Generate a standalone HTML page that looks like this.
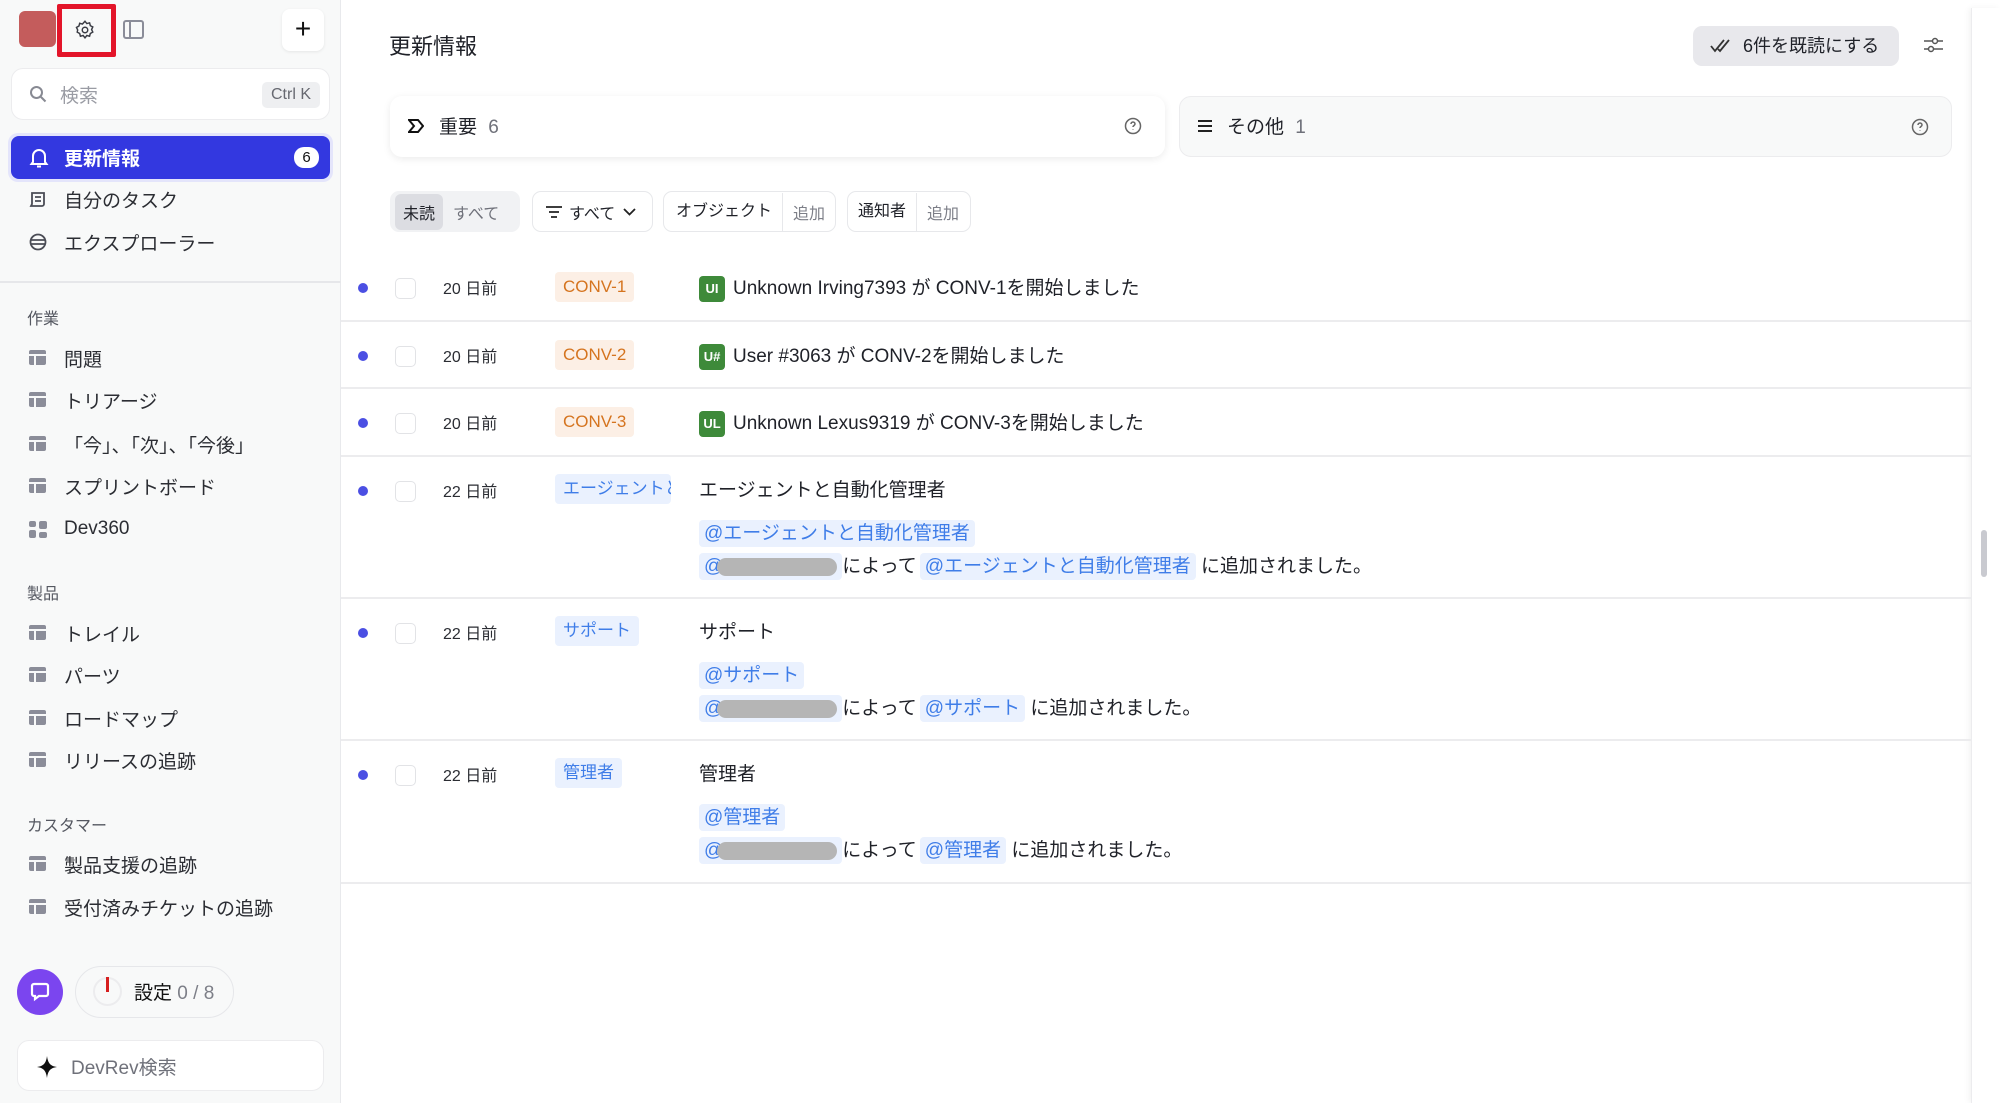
<!DOCTYPE html>
<html><head><meta charset="utf-8"><style>
*{box-sizing:border-box;margin:0;padding:0}
body{width:2000px;height:1103px;overflow:hidden;background:#fff;font-family:"Liberation Sans","Noto Sans CJK JP",sans-serif;color:#1f2128;position:relative}
.a{position:absolute}
.sb{left:0;top:0;width:341px;height:1103px;background:#f8f9f9;border-right:1px solid #e8e9ec}
.ni{position:absolute;left:0;width:341px;height:40px;display:flex;align-items:center;font-size:19px;color:#2b2d33}
.ni .ic{position:absolute;left:29px;top:12px}
.ni .t{position:absolute;left:64px}
.tb{width:17px;height:15px;background:#8b8d99;border-radius:2px;position:relative}
.tb:before{content:"";position:absolute;left:0;right:0;top:4px;height:1.5px;background:#f8f9f9}
.tb:after{content:"";position:absolute;left:5px;width:1.5px;top:5px;bottom:0;background:#f8f9f9}
.sec{position:absolute;left:27px;font-size:16px;color:#555861}
.row{position:absolute;left:341px;width:1630px;border-bottom:2px solid #ececee}
.dot{position:absolute;left:358px;width:10px;height:10px;border-radius:50%;background:#4b4fe3}
.cb{position:absolute;left:395px;width:21px;height:21px;border:1.5px solid #e2e3e6;border-radius:5px;background:#fff}
.dt{position:absolute;left:443px;font-size:16px;color:#2b2d33}
.tag{position:absolute;left:555px;height:30px;padding:0 8px;border-radius:4px;font-size:17px;line-height:30px}
.or{background:#fcefe5;color:#d5741f}
.bl{background:#eaf1fe;color:#3f7de8}
.txt{position:absolute;left:699px;font-size:19px;color:#1f2128;white-space:nowrap}
.av{display:inline-block;width:26px;height:26px;background:#3e8a3a;color:#fff;border-radius:4px;font-size:13px;font-weight:bold;text-align:center;line-height:26px;vertical-align:middle;margin-right:8px}
.m{display:inline-block;background:#eaf1fe;color:#3f7de8;border-radius:4px;padding:0 5px;line-height:27px}
.bx{display:inline-block;width:120px;height:18px;background:#b5b5b5;border-radius:9px;vertical-align:middle;margin-left:-6px}
.fl{position:absolute;top:191px;height:41px;border:1.5px solid #e7e8eb;border-radius:9px;font-size:16px;display:flex;align-items:center;background:#fff}
</style></head><body>
<div class="a sb">
 <div class="a" style="left:19px;top:11px;width:37px;height:36px;background:#c45c5c;border-radius:6px"></div>
 <div class="a" style="left:57px;top:4px;width:59px;height:53px;border:5px solid #e3152a;border-radius:2px"></div>
 <svg class="a" style="left:74px;top:19px" width="22" height="22" viewBox="0 0 24 24" fill="none" stroke="#3a3c44" stroke-width="1.6"><circle cx="12" cy="12" r="3"/><path d="M12 2.5l2 2.5 3-.8.8 3 2.7 1.5-1.3 2.8 1.3 2.8-2.7 1.5-.8 3-3-.8-2 2.5-2-2.5-3 .8-.8-3-2.7-1.5L4 12 2.7 9.2 5.4 7.7l.8-3 3 .8z"/></svg>
 <svg class="a" style="left:123px;top:20px" width="21" height="19" viewBox="0 0 21 19" fill="none" stroke="#8b8d99" stroke-width="2"><rect x="1" y="1" width="19" height="17" rx="2"/><path d="M7 1v17"/></svg>
 <div class="a" style="left:282px;top:9px;width:42px;height:42px;background:#fff;border-radius:8px;box-shadow:0 1px 3px rgba(0,0,0,.08);text-align:center;line-height:40px;font-size:28px;color:#111">+</div>
 <div class="a" style="left:11px;top:68px;width:319px;height:52px;background:#fff;border:1px solid #ececee;border-radius:12px">
  <svg class="a" style="left:17px;top:16px" width="18" height="18" viewBox="0 0 18 18" fill="none" stroke="#888a93" stroke-width="2"><circle cx="7.5" cy="7.5" r="5.5"/><path d="M12 12l4.5 4.5"/></svg>
  <div class="a" style="left:48px;top:12px;font-size:19px;color:#9a9ca4">検索</div>
  <div class="a" style="left:250px;top:13px;width:58px;height:26px;background:#eeeff1;border-radius:5px;font-size:16px;color:#666870;text-align:center;line-height:26px">Ctrl K</div>
 </div>
 <div class="a" style="left:8px;top:133px;width:325px;height:49px;background:#e4e5fb;border-radius:10px"></div>
 <div class="a" style="left:11px;top:136px;width:319px;height:43px;background:#3338e0;border-radius:8px">
  <svg class="a" style="left:18px;top:11px" width="20" height="22" viewBox="0 0 20 22" fill="none" stroke="#fff" stroke-width="2"><path d="M4 15V9a6 6 0 0112 0v6l1.5 2h-15zM8 19.5h4"/></svg>
  <div class="a" style="left:53px;top:8px;font-size:19px;color:#fff;font-weight:bold">更新情報</div>
  <div class="a" style="left:283px;top:11px;width:25px;height:21px;background:#fff;border-radius:10px;text-align:center;font-size:15px;line-height:21px;color:#111">6</div>
 </div>
 <div class="ni" style="top:179px"><svg class="ic" style="top:12px" width="17" height="17" viewBox="0 0 17 17" fill="none" stroke="#4a4c55" stroke-width="1.8"><path d="M3 2h12v11a2 2 0 01-2 2H2l1-2zM6 6h6M6 10h6"/></svg><span class="t">自分のタスク</span></div>
 <div class="ni" style="top:222px"><svg class="ic" style="top:11px" width="18" height="18" viewBox="0 0 18 18" fill="none" stroke="#4a4c55" stroke-width="1.8"><circle cx="9" cy="9" r="7.5"/><path d="M2 7h14M2 11h14"/></svg><span class="t">エクスプローラー</span></div>
 <div class="a" style="left:0;top:281px;width:341px;height:2px;background:#e6e7ea"></div>
 <div class="sec" style="top:305px">作業</div>
 <div class="ni" style="top:338px"><div class="ic tb"></div><span class="t">問題</span></div>
 <div class="ni" style="top:380px"><div class="ic tb"></div><span class="t">トリアージ</span></div>
 <div class="ni" style="top:424px"><div class="ic tb"></div><span class="t">「今」、「次」、「今後」</span></div>
 <div class="ni" style="top:466px"><div class="ic tb"></div><span class="t">スプリントボード</span></div>
 <div class="ni" style="top:509px"><svg class="ic" width="18" height="17" viewBox="0 0 18 17" fill="#8b8d99"><rect x="0" y="0" width="7" height="6" rx="2"/><rect x="10" y="0" width="8" height="8" rx="2"/><rect x="0" y="9" width="7" height="8" rx="2"/><rect x="10" y="11" width="8" height="6" rx="2"/></svg><span class="t">Dev360</span></div>
 <div class="sec" style="top:580px">製品</div>
 <div class="ni" style="top:613px"><div class="ic tb"></div><span class="t">トレイル</span></div>
 <div class="ni" style="top:655px"><div class="ic tb"></div><span class="t">パーツ</span></div>
 <div class="ni" style="top:698px"><div class="ic tb"></div><span class="t">ロードマップ</span></div>
 <div class="ni" style="top:740px"><div class="ic tb"></div><span class="t">リリースの追跡</span></div>
 <div class="sec" style="top:812px">カスタマー</div>
 <div class="ni" style="top:844px"><div class="ic tb"></div><span class="t">製品支援の追跡</span></div>
 <div class="ni" style="top:887px"><div class="ic tb"></div><span class="t">受付済みチケットの追跡</span></div>
 <div class="a" style="left:17px;top:969px;width:46px;height:46px;background:#7b45ef;border-radius:50%">
  <svg class="a" style="left:13px;top:13px" width="20" height="20" viewBox="0 0 20 20" fill="none" stroke="#fff" stroke-width="2.2"><path d="M4 2h12a2 2 0 012 2v8a2 2 0 01-2 2H9l-4 3v-3H4a2 2 0 01-2-2V4a2 2 0 012-2z"/></svg>
 </div>
 <div class="a" style="left:75px;top:966px;width:159px;height:52px;border:1.5px solid #e6e7ea;border-radius:26px;background:#f8f9f9">
  <div class="a" style="left:17px;top:10px;width:29px;height:29px;border:2.5px solid #ececee;border-radius:50%"></div>
  <div class="a" style="left:30px;top:10px;width:3px;height:15px;background:#d61f1f"></div>
  <div class="a" style="left:58px;top:11px;font-size:19px"><span style="color:#111">設定</span> <span style="color:#7d7f88">0 / 8</span></div>
 </div>
 <div class="a" style="left:17px;top:1040px;width:307px;height:51px;background:#fff;border:1px solid #ececee;border-radius:12px">
  <svg class="a" style="left:19px;top:15px" width="20" height="22" viewBox="0 0 20 22"><path d="M10 0C11 7 13 10 20 11 13 12 11 15 10 22 9 15 7 12 0 11 7 10 9 7 10 0z" fill="#111"/></svg>
  <div class="a" style="left:53px;top:12px;font-size:19px;color:#6f717a">DevRev検索</div>
 </div>
</div>

<div class="a" style="left:389px;top:29px;font-size:22px;color:#1f2128">更新情報</div>
<div class="a" style="left:1693px;top:26px;width:206px;height:40px;background:#e8e8ec;border-radius:9px;font-size:18px;line-height:40px;color:#1f2128">
 <svg class="a" style="left:17px;top:13px" width="22" height="14" viewBox="0 0 22 14" fill="none" stroke="#333" stroke-width="1.8"><path d="M1 7l4 5L14 1M8 10l2 2 9-11"/></svg>
 <span class="a" style="left:50px">6件を既読にする</span>
</div>
<svg class="a" style="left:1923px;top:33px" width="20" height="24" viewBox="0 0 20 24" fill="none" stroke="#555" stroke-width="1.5"><path d="M1 8h19M1 16h19"/><circle cx="12" cy="8" r="2.5" fill="#fff"/><circle cx="8" cy="16" r="2.5" fill="#fff"/></svg>
<div class="a" style="left:1971px;top:8px;width:29px;height:1095px;background:#fff;border-left:1px solid #ececee;box-shadow:-2px 0 6px rgba(0,0,0,.05)"></div>
<div class="a" style="left:1981px;top:530px;width:6px;height:47px;background:#c9cad0;border-radius:3px"></div>

<div class="a" style="left:390px;top:96px;width:775px;height:61px;background:#fff;border-radius:12px;box-shadow:0 2px 8px rgba(0,0,0,.08)">
 <svg class="a" style="left:18px;top:22px" width="16" height="16" viewBox="0 0 16 16" fill="none" stroke="#111" stroke-width="2"><path d="M1 2h9l5 6-5 6H1l5-6z"/></svg>
 <div class="a" style="left:49px;top:16px;font-size:19px;color:#1f2128">重要 <span style="color:#6f717a;margin-left:6px">6</span></div>
 <svg class="a" style="left:734px;top:21px" width="18" height="18" viewBox="0 0 18 18" fill="none" stroke="#666" stroke-width="1.5"><circle cx="9" cy="9" r="7.5"/><path d="M7 7a2 2 0 114 0c0 1.5-2 1.5-2 3M9 12.5v.5"/></svg>
</div>
<div class="a" style="left:1179px;top:96px;width:773px;height:61px;background:#f8f9f9;border:1px solid #ececee;border-radius:12px">
 <svg class="a" style="left:18px;top:22px" width="14" height="14" viewBox="0 0 14 14" stroke="#222" stroke-width="2"><path d="M0 2h14M0 7h14M0 12h14"/></svg>
 <div class="a" style="left:47px;top:15px;font-size:19px;color:#1f2128">その他 <span style="color:#6f717a;margin-left:6px">1</span></div>
 <svg class="a" style="left:731px;top:21px" width="18" height="18" viewBox="0 0 18 18" fill="none" stroke="#666" stroke-width="1.5"><circle cx="9" cy="9" r="7.5"/><path d="M7 7a2 2 0 114 0c0 1.5-2 1.5-2 3M9 12.5v.5"/></svg>
</div>

<div class="fl" style="left:390px;width:130px;background:#f1f2f4;border-color:#f1f2f4">
 <span style="margin-left:4px;background:#dcdde2;border-radius:6px;padding:6px 8px">未読</span><span style="margin-left:10px;color:#6f717a">すべて</span>
</div>
<div class="fl" style="left:532px;width:121px">
 <svg style="margin-left:13px" width="16" height="14" viewBox="0 0 16 14" stroke="#222" stroke-width="1.8"><path d="M0 2h16M3 7h10M5 12h6"/></svg>
 <span style="margin-left:7px">すべて</span>
 <svg style="margin-left:8px" width="13" height="8" viewBox="0 0 13 8" fill="none" stroke="#222" stroke-width="1.8"><path d="M1 1l5.5 5.5L12 1"/></svg>
</div>
<div class="fl" style="left:663px;width:173px">
 <span style="padding:0 10px 0 12px;border-right:1.5px solid #e7e8eb;line-height:38px">オブジェクト</span><span style="margin-left:10px;color:#7d7f88">追加</span>
</div>
<div class="fl" style="left:847px;width:124px">
 <span style="padding:0 10px 0 10px;border-right:1.5px solid #e7e8eb;line-height:38px">通知者</span><span style="margin-left:10px;color:#7d7f88">追加</span>
</div>

<div class="row" style="top:255px;height:67px"></div>
<div class="row" style="top:322px;height:67px"></div>
<div class="row" style="top:389px;height:68px"></div>
<div class="row" style="top:457px;height:142px"></div>
<div class="row" style="top:599px;height:142px"></div>
<div class="row" style="top:741px;height:143px"></div>

<div class="dot" style="top:283px"></div><div class="cb" style="top:278px"></div><div class="dt" style="top:275px">20 日前</div>
<div class="tag or" style="top:272px">CONV-1</div>
<div class="txt" style="top:273px"><span class="av">UI</span>Unknown Irving7393 が CONV-1を開始しました</div>

<div class="dot" style="top:351px"></div><div class="cb" style="top:346px"></div><div class="dt" style="top:343px">20 日前</div>
<div class="tag or" style="top:340px">CONV-2</div>
<div class="txt" style="top:341px"><span class="av">U#</span>User #3063 が CONV-2を開始しました</div>

<div class="dot" style="top:418px"></div><div class="cb" style="top:413px"></div><div class="dt" style="top:410px">20 日前</div>
<div class="tag or" style="top:407px">CONV-3</div>
<div class="txt" style="top:408px"><span class="av">UL</span>Unknown Lexus9319 が CONV-3を開始しました</div>

<div class="dot" style="top:486px"></div><div class="cb" style="top:481px"></div><div class="dt" style="top:478px">22 日前</div>
<div class="tag bl" style="top:474px;width:116px;overflow:hidden;white-space:nowrap;padding-right:0">エージェントと自動化</div>
<div class="txt" style="top:475px">エージェントと自動化管理者</div>
<div class="txt" style="top:520px"><span class="m">@エージェントと自動化管理者</span></div>
<div class="txt" style="top:551px"><span class="m">@<span class="bx"></span></span>によって<span class="m" style="margin-left:3px">@エージェントと自動化管理者</span> に追加されました。</div>

<div class="dot" style="top:628px"></div><div class="cb" style="top:623px"></div><div class="dt" style="top:620px">22 日前</div>
<div class="tag bl" style="top:616px">サポート</div>
<div class="txt" style="top:617px">サポート</div>
<div class="txt" style="top:662px"><span class="m">@サポート</span></div>
<div class="txt" style="top:693px"><span class="m">@<span class="bx"></span></span>によって<span class="m" style="margin-left:3px">@サポート</span> に追加されました。</div>

<div class="dot" style="top:770px"></div><div class="cb" style="top:765px"></div><div class="dt" style="top:762px">22 日前</div>
<div class="tag bl" style="top:758px">管理者</div>
<div class="txt" style="top:759px">管理者</div>
<div class="txt" style="top:804px"><span class="m">@管理者</span></div>
<div class="txt" style="top:835px"><span class="m">@<span class="bx"></span></span>によって<span class="m" style="margin-left:3px">@管理者</span> に追加されました。</div>
</body></html>
